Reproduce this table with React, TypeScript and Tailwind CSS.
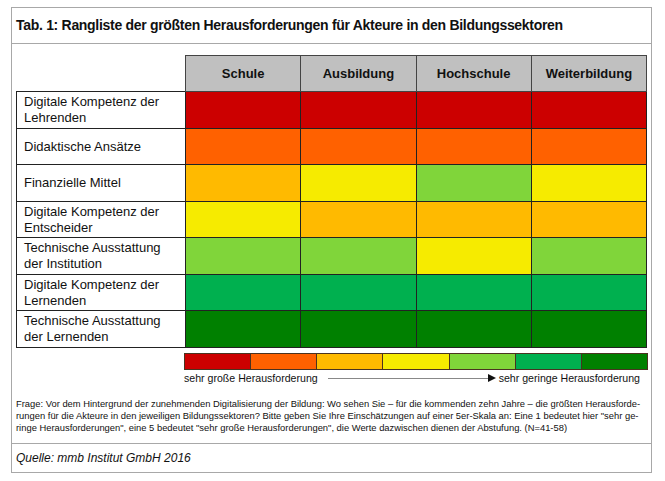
const columns = ["Schule", "Ausbildung", "Hochschule", "Weiterbildung"]

const colors: Record<string, string> = {
  r: "bg-[#cc0000]",
  o: "bg-[#ff6100]",
  a: "bg-[#ffba00]",
  y: "bg-[#f6eb00]",
  l: "bg-[#80d53a]",
  g: "bg-[#00b04f]",
  d: "bg-[#008000]",
}

const rows: { label: string[]; cells: string[] }[] = [
  { label: ["Digitale Kompetenz der", "Lehrenden"], cells: ["r", "r", "r", "r"] },
  { label: ["Didaktische Ansätze"], cells: ["o", "o", "o", "o"] },
  { label: ["Finanzielle Mittel"], cells: ["a", "y", "l", "y"] },
  { label: ["Digitale Kompetenz der", "Entscheider"], cells: ["y", "a", "a", "a"] },
  { label: ["Technische Ausstattung", "der Institution"], cells: ["l", "l", "y", "l"] },
  { label: ["Digitale Kompetenz der", "Lernenden"], cells: ["g", "g", "g", "g"] },
  { label: ["Technische Ausstattung", "der Lernenden"], cells: ["d", "d", "d", "d"] },
]

const scale = ["r", "o", "a", "y", "l", "g", "d"]

export default function App() {
  return (
    <div className="h-[481px] w-[665px] bg-white pl-[11px] pt-[7px] font-['Liberation_Sans',Arial,sans-serif] text-[#111]">
      <div className="flex h-[466px] w-[641px] flex-col border border-[#a8a8a8]">
        <div className="flex h-[36px] shrink-0 items-center border-b border-[#a8a8a8] pl-[4px]">
          <h1 className="text-[14px] font-bold tracking-[-0.3px]">
            Tab. 1: Rangliste der größten Herausforderungen für Akteure in den Bildungssektoren
          </h1>
        </div>

        <div className="pl-[4px] pt-[11px]">
          <table className="w-[631px] table-fixed border-collapse text-[13px]">
            <colgroup>
              <col className="w-[169px]" />
              <col />
              <col />
              <col />
              <col />
            </colgroup>
            <thead>
              <tr className="h-[36px]">
                <th />
                {columns.map((c) => (
                  <th key={c} className="border border-[#444] bg-[#c0c0c0] text-center font-bold">
                    {c}
                  </th>
                ))}
              </tr>
            </thead>
            <tbody>
              {rows.map((row, i) => (
                <tr key={i} className={i % 2 === 0 ? "h-[37px]" : "h-[36px]"}>
                  <td className="border border-[#222] pl-[7px] align-middle leading-[16px]">
                    {row.label.map((line) => (
                      <span key={line} className="block">
                        {line}
                      </span>
                    ))}
                  </td>
                  {row.cells.map((c, j) => (
                    <td key={j} className={`border border-[#222] ${colors[c]}`} />
                  ))}
                </tr>
              ))}
            </tbody>
          </table>

          <div className="ml-[168px] mt-[5px] flex h-[17px] w-[464px]">
            {scale.map((c, i) => (
              <div key={i} className={`flex-1 border border-[#4a3320] ${i > 0 ? "-ml-px" : ""} ${colors[c]}`} />
            ))}
          </div>
          <div className="ml-[168px] mt-[1px] flex w-[464px] items-center whitespace-nowrap text-[10.6px] leading-[14px]">
            <span className="shrink-0">sehr große Herausforderung</span>
            <div className="ml-[10px] h-px w-[160px] shrink-0 bg-[#888]" />
            <svg width="8" height="8" viewBox="0 0 8 8" className="shrink-0">
              <path d="M0 0 L8 4 L0 8 Z" fill="#111" />
            </svg>
            <span className="ml-[3px] shrink-0">sehr geringe Herausforderung</span>
          </div>

          <p className="mt-[13px] pr-[2px] text-[9.4px] leading-[12px]">
            Frage: Vor dem Hintergrund der zunehmenden Digitalisierung der Bildung: Wo sehen Sie – für die kommenden zehn Jahre – die größten Herausforde-
            <br />
            rungen für die Akteure in den jeweiligen Bildungssektoren? Bitte geben Sie Ihre Einschätzungen auf einer 5er-Skala an: Eine 1 bedeutet hier "sehr ge-
            <br />
            ringe Herausforderungen", eine 5 bedeutet "sehr große Herausforderungen", die Werte dazwischen dienen der Abstufung. (N=41-58)
          </p>
        </div>

        <div className="mt-auto flex h-[29px] items-center border-t border-[#a8a8a8] pl-[4px]">
          <span className="text-[12px] italic">Quelle: mmb Institut GmbH 2016</span>
        </div>
      </div>
    </div>
  )
}
